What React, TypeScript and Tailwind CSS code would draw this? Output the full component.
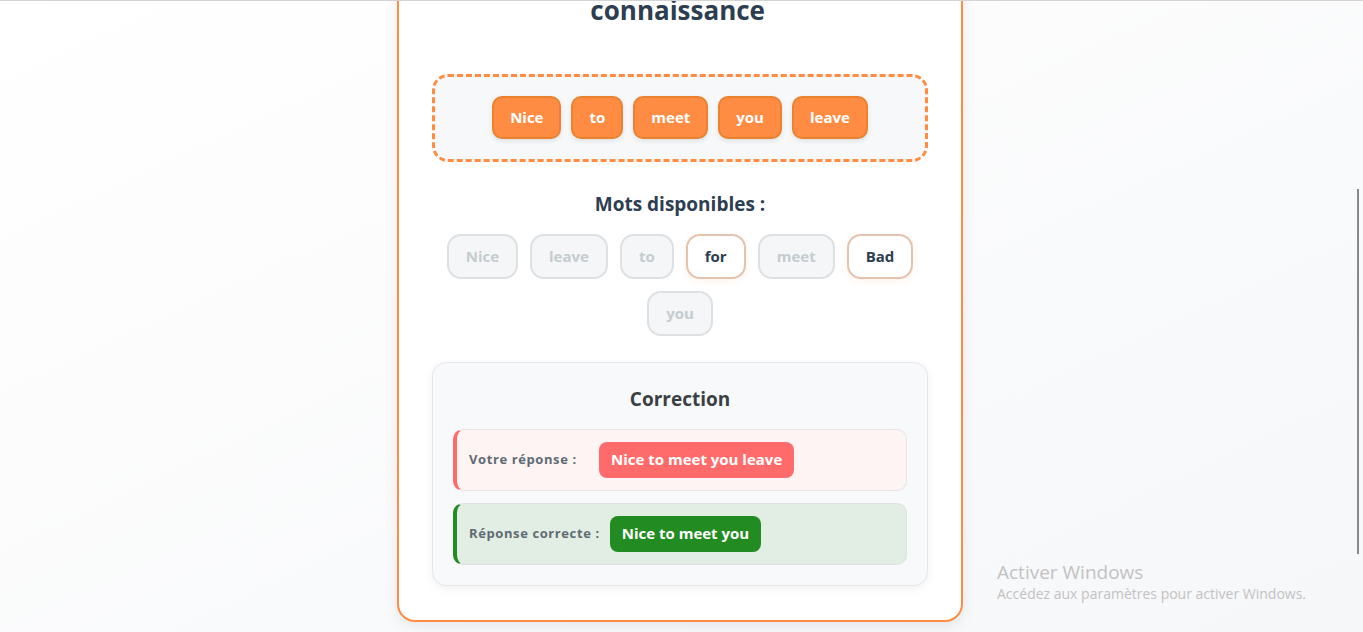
const font = { fontFamily: '"Comic Sans MS", "Open Sans", sans-serif' }

const placed = ['Nice', 'to', 'meet', 'you', 'leave']

const available = [
  { word: 'Nice', used: true },
  { word: 'leave', used: true },
  { word: 'to', used: true },
  { word: 'for', used: false },
  { word: 'meet', used: true },
  { word: 'Bad', used: false },
  { word: 'you', used: true },
]

export default function App() {
  return (
    <div
      className="relative h-[632px] w-[1363px] overflow-hidden border-t border-[#d4d4d4] bg-gradient-to-br from-white to-[#f6f7f9]"
      style={font}
    >
      {/* Card */}
      <div className="-mt-[43px] ml-[397px] w-[566px] rounded-[18px] border-2 border-[#ff8c42] bg-white px-[33px] pb-[34px] pt-[28px] shadow-[0_4px_14px_rgba(0,0,0,0.08)]">
        <h1 className="text-center text-[26px] font-bold leading-[34px] text-[#2c3e50]">
          connaissance<span className="align-super text-[14px]">ˋ</span>
        </h1>

        {/* Drop zone */}
        <div className="mt-[47px] flex h-[88px] items-center justify-center gap-[10px] rounded-[16px] border-[3px] border-dashed border-[#ff8c42] bg-[#f7f8fa]">
          {placed.map((w) => (
            <span
              key={w}
              className="flex h-[43px] items-center rounded-[10px] border-2 border-[#e98330] bg-[#ff8c42] px-[16px] text-[15px] font-bold text-white shadow-[0_2px_5px_rgba(0,0,0,0.1)]"
            >
              {w}
            </span>
          ))}
        </div>

        {/* Available words */}
        <h2 className="mt-[28px] text-center text-[19px] font-bold leading-[28px] text-[#2c3e50]">
          Mots disponibles :
        </h2>
        <div className="mt-[16px] flex flex-wrap justify-center gap-[12px] px-[12px]">
          {available.map((a) =>
            a.used ? (
              <span
                key={a.word}
                className="flex h-[45px] items-center rounded-[14px] border-2 border-[#dde1e4] bg-[#f4f6f7] px-[17px] text-[15px] font-bold text-[#c5ccd0]"
              >
                {a.word}
              </span>
            ) : (
              <span
                key={a.word}
                className="flex h-[45px] items-center rounded-[14px] border-2 border-[#e2c4ae] bg-white px-[17px] text-[15px] font-bold text-[#2c3e50] shadow-[0_2px_6px_rgba(255,140,66,0.12)]"
              >
                {a.word}
              </span>
            )
          )}
        </div>

        {/* Correction */}
        <div className="mt-[26px] rounded-[14px] border border-[#e5e7eb] bg-[#f8f9fa] px-[20px] pb-[20px] pt-[22px] shadow-[0_3px_10px_rgba(0,0,0,0.06)]">
          <h3 className="text-center text-[19px] font-bold leading-[28px] text-[#3a3f44]">
            Correction
          </h3>
          <div className="mt-[16px] flex flex-col gap-[12px]">
            <div className="flex h-[62px] items-center rounded-[10px] border border-l-4 border-[#e5e5e5] border-l-[#ff6b6b] bg-[#fff4f4] pl-[12px]">
              <span className="mr-[10px] min-w-[120px] text-[13px] font-bold tracking-[0.6px] text-[#5f6b73]">
                Votre réponse :
              </span>
              <span className="flex h-[36px] items-center rounded-[8px] bg-[#ff6b6b] px-[12px] text-[15px] font-bold text-white">
                Nice to meet you leave
              </span>
            </div>
            <div className="flex h-[62px] items-center rounded-[10px] border border-l-4 border-[#dde3de] border-l-[#228b22] bg-[#e2ede3] pl-[12px]">
              <span className="mr-[10px] min-w-[120px] text-[13px] font-bold tracking-[0.6px] text-[#5f6b73]">
                Réponse correcte :
              </span>
              <span className="flex h-[36px] items-center rounded-[8px] bg-[#228b22] px-[12px] text-[15px] font-bold text-white">
                Nice to meet you
              </span>
            </div>
          </div>
        </div>
      </div>

      {/* Windows watermark */}
      <div
        className="absolute left-[997px] top-[559px] text-[#c2c2c2]"
        style={{ fontFamily: '"Open Sans", "Noto Sans", sans-serif' }}
      >
        <div className="text-[19px] leading-[24px]">Activer Windows</div>
        <div className="text-[14px] leading-[20px]">Accédez aux paramètres pour activer Windows.</div>
      </div>

      {/* Scrollbar thumb */}
      <div className="absolute left-[1357px] top-[188px] h-[365px] w-[2px] bg-[#8a8a8a]" />
    </div>
  )
}
